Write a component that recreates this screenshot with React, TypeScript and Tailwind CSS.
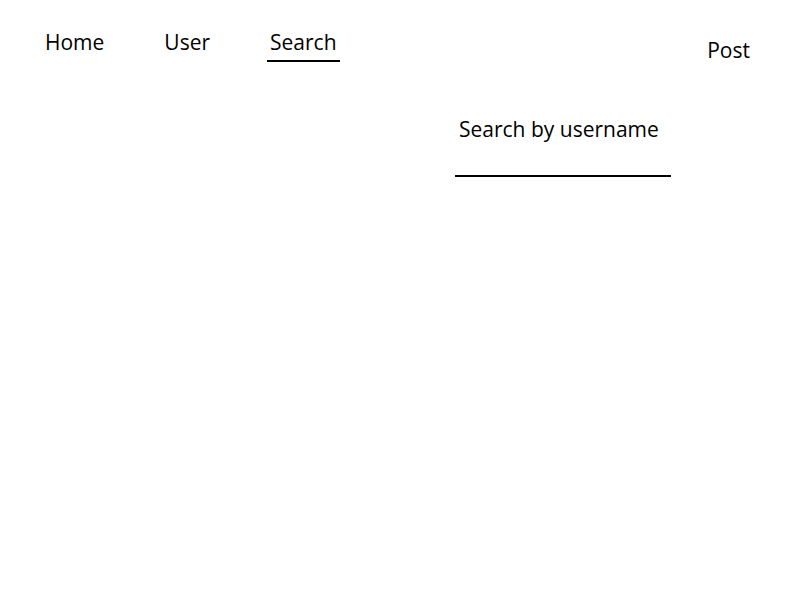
export default function App() {
  return (
    <div className="w-[800px] h-[600px] bg-white text-black font-['Open_Sans',sans-serif]">
      <header className="flex items-start justify-between pl-[45px] pr-[50px] pt-[28px]">
        <nav className="flex items-start text-[21px] leading-[28px]">
          <a className="block">Home</a>
          <a className="block ml-[60px]">User</a>
          <a className="block ml-[57px] border-b-[2px] border-black px-[3px] pb-[4px]">Search</a>
        </nav>
        <button className="mt-[8px] text-[21px] leading-[28px]">Post</button>
      </header>
      <main className="pl-[455px] pt-[51px]">
        <div className="w-[216px] flex flex-col items-start">
          <label className="pl-[4px] text-[21px] leading-[28px]">Search by username</label>
          <input
            className="mt-[18px] w-[216px] h-[16px] border-b-[2px] border-black outline-none"
            aria-label="Search by username"
          />
        </div>
      </main>
    </div>
  )
}
